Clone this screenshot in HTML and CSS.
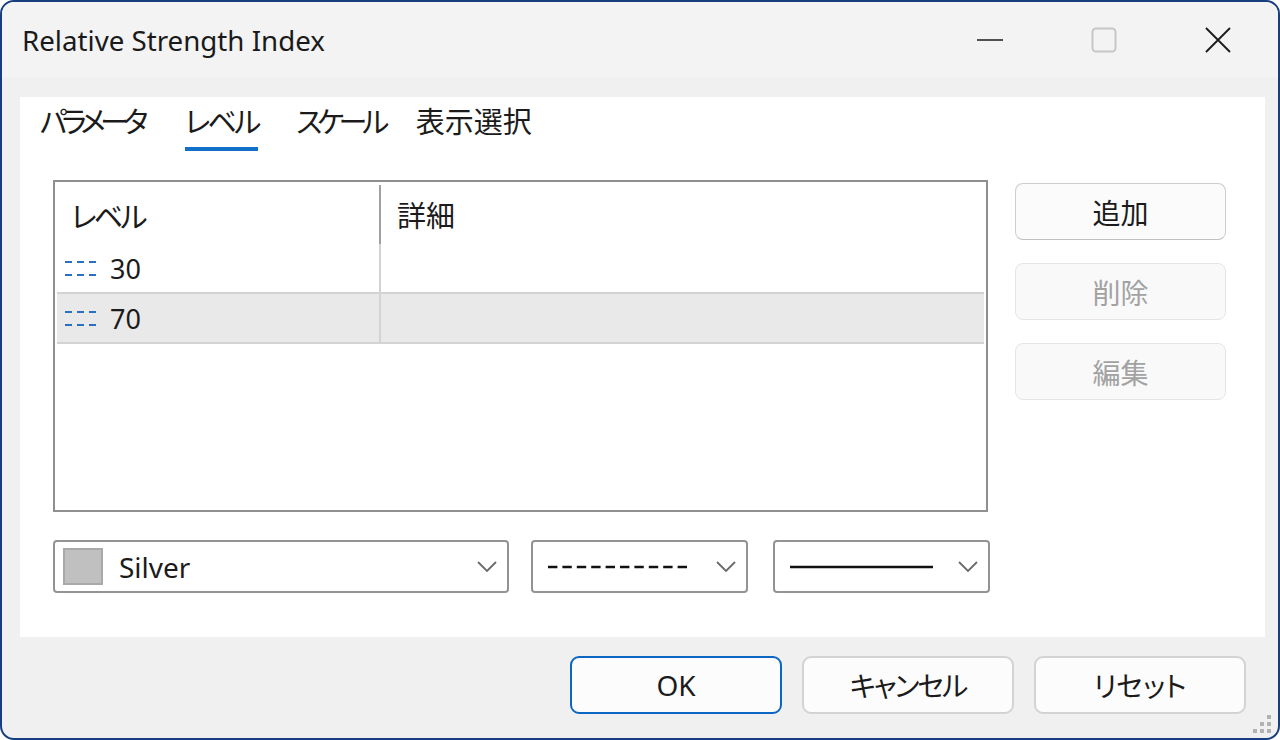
FILE: index.html
```html
<!DOCTYPE html>
<html lang="ja">
<head>
<meta charset="utf-8">
<title>Relative Strength Index</title>
<link rel="stylesheet" href="styles.css">
</head>
<body>
<div class="window">
  <div class="titlebar">
    <div class="title">Relative Strength Index</div>
    <div class="cap">
      <svg width="26" height="4" viewBox="0 0 26 4"><line x1="0" y1="2" x2="26" y2="2" stroke="#1a1a1a" stroke-width="1.6"/></svg>
    </div>
    <div class="cap">
      <svg width="26" height="26" viewBox="0 0 26 26"><rect x="1.5" y="1.5" width="23" height="23" rx="3.5" fill="none" stroke="#c6c6c6" stroke-width="2"/></svg>
    </div>
    <div class="cap cap-close">
      <svg width="26" height="26" viewBox="0 0 26 26"><path d="M1 1 L25 25 M25 1 L1 25" stroke="#1a1a1a" stroke-width="1.8" fill="none"/></svg>
    </div>
  </div>
  <div class="body">
    <div class="panel">
      <div class="tabs">
        <div class="tab t1">パラメータ</div>
        <div class="tab t2 active">レベル</div>
        <div class="tab t3">スケール</div>
        <div class="tab t4">表示選択</div>
      </div>
      <div class="content">
        <div class="list">
          <div class="lrow lhead">
            <div class="c1"><span class="htext kana">レベル</span></div>
            <div class="c2"><span class="htext2">詳細</span></div>
          </div>
          <div class="lrow item">
            <div class="c1">
              <svg class="dash" width="34" height="18" viewBox="0 0 34 18"><path d="M1 3h7M13 3h7M25 3h7M1 16h7M13 16h7M25 16h7" stroke="#2a6fc0" stroke-width="2"/></svg>
              <span>30</span>
            </div>
            <div class="c2"></div>
          </div>
          <div class="lrow item selected">
            <div class="c1">
              <svg class="dash" width="34" height="18" viewBox="0 0 34 18"><path d="M1 3h7M13 3h7M25 3h7M1 16h7M13 16h7M25 16h7" stroke="#2a6fc0" stroke-width="2"/></svg>
              <span>70</span>
            </div>
            <div class="c2"></div>
          </div>
        </div>
        <div class="side">
          <div class="btn">追加</div>
          <div class="btn disabled">削除</div>
          <div class="btn disabled">編集</div>
        </div>
      </div>
      <div class="dropdowns">
        <div class="dd dd-color">
          <span class="swatch"></span>
          <span class="ddtext">Silver</span>
          <svg class="chev" width="20" height="11" viewBox="0 0 20 11"><path d="M1 1 L10 10 L19 1" stroke="#6a6a6a" stroke-width="1.8" fill="none"/></svg>
        </div>
        <div class="dd dd-style">
          <svg class="ddline" width="144" height="4" viewBox="0 0 144 4"><line x1="0" y1="2" x2="144" y2="2" stroke="#111" stroke-width="2.5" stroke-dasharray="9.4 5"/></svg>
          <svg class="chev" width="20" height="11" viewBox="0 0 20 11"><path d="M1 1 L10 10 L19 1" stroke="#6a6a6a" stroke-width="1.8" fill="none"/></svg>
        </div>
        <div class="dd dd-width">
          <svg class="ddline" width="143" height="4" viewBox="0 0 143 4"><line x1="0" y1="2" x2="143" y2="2" stroke="#111" stroke-width="2.5"/></svg>
          <svg class="chev" width="20" height="11" viewBox="0 0 20 11"><path d="M1 1 L10 10 L19 1" stroke="#6a6a6a" stroke-width="1.8" fill="none"/></svg>
        </div>
      </div>
    </div>
    <div class="footer">
      <div class="btn fbtn primary">OK</div>
      <div class="btn fbtn"><span class="kana-s">キャンセル</span></div>
      <div class="btn fbtn">リセット</div>
    </div>
    <div class="grip">
      <i class="g g3"></i>
      <i class="g g2"></i><i class="g g3"></i>
      <i class="g g1"></i><i class="g g2"></i><i class="g g3"></i>
    </div>
  </div>
</div>
</body>
</html>
```

FILE: styles.css
```css
* { box-sizing: border-box; }
html, body {
  margin: 0;
  padding: 0;
  background: #ffffff;
}
body {
  font-family: "Noto Sans", "Noto Sans CJK JP", sans-serif;
  font-feature-settings: "palt";
  font-size: 27px;
  color: #1b1b1b;
}
.window {
  width: 1280px;
  height: 740px;
  border: 2px solid #173f80;
  border-radius: 14px;
  background: #f0f0f0;
  overflow: hidden;
  display: flex;
  flex-direction: column;
}
.titlebar {
  height: 75px;
  background: #f3f3f3;
  display: flex;
  align-items: center;
  padding-right: 3px;
  flex: none;
}
.title {
  flex: 1;
  padding-left: 20px;
  font-size: 27.7px;
  color: #1a1a1a;
}
.cap {
  width: 114px;
  height: 75px;
  display: flex;
  align-items: center;
  justify-content: center;
}
.cap svg { display: block; }
.body {
  flex: 1;
  position: relative;
  display: flex;
  flex-direction: column;
  padding: 20px 13px 0 18px;
}
.panel {
  background: #ffffff;
  height: 540px;
  flex: none;
}
.tabs {
  display: flex;
  height: 54px;
  padding-left: 20px;
  align-items: flex-start;
}
.tab {
  font-size: 29px;
  line-height: 40px;
  margin-top: 5px;
  padding-bottom: 5px;
  border-bottom: 4px solid transparent;
  color: #1b1b1b;
}
.t1 { letter-spacing: -5.6px; margin-right: 42px; }
.t2 { letter-spacing: -2.9px; margin-right: 38px; }
.t3 { letter-spacing: -5.35px; margin-right: 32px; }
.kana { letter-spacing: -2.9px; }
.kana-s { letter-spacing: -2px; }
.tab.active { border-bottom-color: #1270c8; }
.content {
  display: flex;
  padding: 29px 0 0 33px;
  gap: 27px;
}
.list {
  width: 935px;
  height: 332px;
  border: 2px solid #8f8f8f;
  padding: 2px;
  background: #fff;
}
.lrow {
  display: flex;
}
.c1 {
  width: 324px;
  display: flex;
  align-items: center;
}
.c2 {
  flex: 1;
  display: flex;
  align-items: center;
}
.lhead { height: 60px; }
.lhead .c1 {
  border-right: 2px solid #a0a0a0;
  padding-left: 14px;
  margin-top: 1px;
}
.lhead .c2 { padding-left: 16px; }
.htext, .htext2 { font-size: 29px; }
.item {
  height: 50px;
  border-bottom: 2px solid #d3d3d3;
}
.item .c1 {
  border-right: 2px solid #d3d3d3;
  padding-left: 7px;
  gap: 12px;
}
.item.selected { background: #e9e9e9; }
.dash { display: block; flex: none; }
.side {
  width: 211px;
  padding-top: 3px;
  display: flex;
  flex-direction: column;
  gap: 23px;
}
.btn {
  height: 57px;
  border: 1px solid #cdcdcd;
  border-bottom-color: #c0c0c0;
  border-radius: 8px;
  background: #fbfbfb;
  display: flex;
  align-items: center;
  justify-content: center;
  font-size: 28px;
  color: #1b1b1b;
}
.btn.disabled {
  border-color: #e5e5e5;
  background: #f9f9f9;
  color: #a2a2a2;
}
.dropdowns {
  display: flex;
  padding-left: 33px;
  margin-top: 28px;
}
.dd {
  height: 53px;
  border: 2px solid #939393;
  border-radius: 4px;
  background: #fff;
  display: flex;
  align-items: center;
  position: relative;
}
.dd-color { width: 456px; padding-left: 8px; }
.dd-style { width: 217px; margin-left: 22px; padding-left: 15px; }
.dd-width { width: 217px; margin-left: 25px; padding-left: 15px; }
.swatch {
  width: 40px;
  height: 37px;
  background: #c0c0c0;
  border: 2px solid #a9a9a9;
  flex: none;
}
.ddtext {
  margin-left: 16px;
  font-size: 28px;
  flex: 1;
}
.ddline { display: block; flex: none; }
.chev {
  display: block;
  margin-left: auto;
  margin-right: 10px;
  flex: none;
}
.footer {
  display: flex;
  justify-content: flex-end;
  gap: 20px;
  margin-top: 19px;
  padding-right: 19px;
}
.fbtn {
  width: 212px;
  height: 58px;
  border: 2px solid #d3d3d3;
  border-radius: 9px;
  background: #fcfcfc;
}
.fbtn.primary { border-color: #0b66c4; }
.grip {
  position: absolute;
  right: 7px;
  bottom: 5px;
  width: 18px;
  height: 18px;
  display: grid;
  grid-template-columns: repeat(3, 4px);
  grid-template-rows: repeat(3, 4px);
  gap: 3px;
}
.g {
  display: block;
  width: 4px;
  height: 4px;
  background: #b2b2b2;
}
.g1 { grid-column: 1; }
.g2 { grid-column: 2; }
.g3 { grid-column: 3; }
```
